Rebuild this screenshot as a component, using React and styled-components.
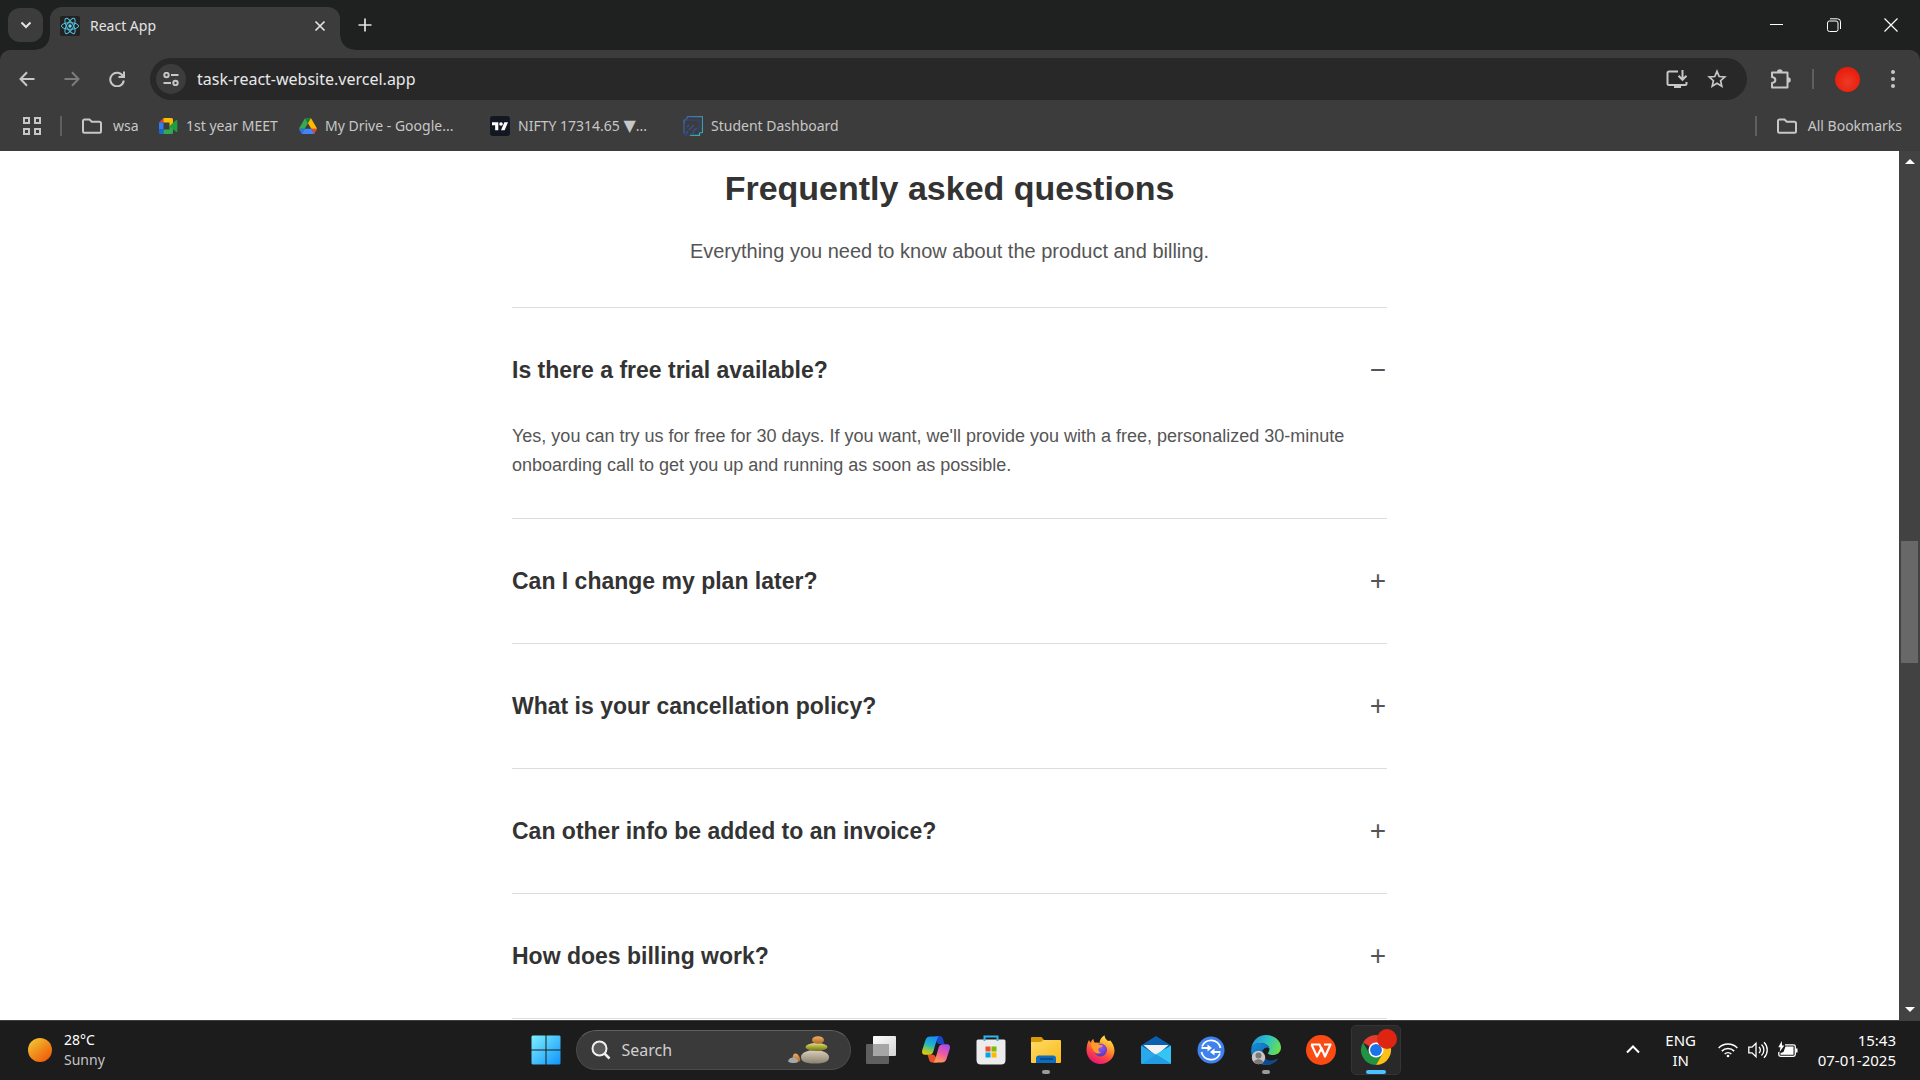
import React, { useState } from "react";
import styled, { createGlobalStyle } from "styled-components";

const GlobalStyle = createGlobalStyle`
  * { box-sizing: border-box; }
  body { margin: 0; background: #fff; }
  button, input { font: inherit; color: inherit; border: 0; padding: 0; margin: 0; background: none; outline: none; }
  a { color: inherit; text-decoration: none; }
  svg { display: block; flex: none; }
`;

const uiFont = `"Segoe UI", "Noto Sans", "Open Sans", sans-serif`;
const pageFont = `Arial, "Liberation Sans", sans-serif`;

const Screen = styled.div`
  height: 100vh;
  display: flex;
  flex-direction: column;
  overflow: hidden;
  font-family: ${uiFont};
`;

/* ---------- browser frame ---------- */

const TitleBar = styled.header`
  height: 50px;
  flex: none;
  display: flex;
  align-items: flex-start;
  padding-left: 8px;
  background: #1f2120;
  color: #e3e3e3;
`;

const TabSearch = styled.button`
  width: 35px;
  height: 34px;
  margin: 8px 7px 0 0;
  display: grid;
  place-items: center;
  border-radius: 12px;
  background: #3c3c3c;
`;

const Tab = styled.div`
  position: relative;
  width: 290px;
  height: 43px;
  margin-top: 7px;
  padding: 0 12px 6px 10px;
  display: flex;
  align-items: center;
  gap: 10px;
  border-radius: 12px 12px 0 0;
  background: #3c3c3c;
  font-size: 14px;
  line-height: 20px;

  &::before,
  &::after {
    content: "";
    position: absolute;
    bottom: 0;
    width: 14px;
    height: 14px;
  }
  &::before {
    left: -14px;
    background: radial-gradient(circle at 0 0, transparent 13px, #3c3c3c 14px);
  }
  &::after {
    right: -14px;
    background: radial-gradient(circle at 100% 0, transparent 13px, #3c3c3c 14px);
  }
`;

const TabTitle = styled.span`
  flex: 1;
`;

const IconButton = styled.button`
  width: ${(p) => p.$w || 30}px;
  height: ${(p) => p.$h || 30}px;
  flex: none;
  display: grid;
  place-items: center;
  border-radius: 50%;
  background: ${(p) => p.$bg || "transparent"};
`;

const TabClose = styled(IconButton).attrs({ $w: 16, $h: 20 })``;

const NewTab = styled(IconButton)`
  margin: 10px 0 0 10px;
`;

const WindowControls = styled.div`
  margin-left: auto;
  padding-right: 1px;
  display: flex;
`;

const WindowButton = styled(IconButton).attrs({ $w: 57, $h: 49 })`
  border-radius: 0;
`;

const Chrome = styled.div`
  background: #1f2120;
  flex: none;
`;

const ChromeInner = styled.div`
  background: #3c3c3c;
  border-radius: 10px 10px 0 0;
  color: #c7c7c7;
`;

const Toolbar = styled.nav`
  height: 50px;
  padding: 8px 19px 0 12px;
  display: flex;
  align-items: center;
`;

const NavGroup = styled.div`
  display: flex;
  gap: 15px;
  margin-right: 18px;
`;

const Omnibox = styled.form`
  flex: 1;
  height: 42px;
  padding: 0 15px 0 6px;
  display: flex;
  align-items: center;
  border-radius: 21px;
  background: #282828;
`;

const UrlInput = styled.input`
  flex: 1;
  margin-left: 11px;
  color: #e8e8e8;
  font-size: 16px;
  line-height: 26px;
`;

const OmniActions = styled.div`
  display: flex;
  gap: 10px;
`;

const ToolbarEnd = styled.div`
  display: flex;
  align-items: center;
  margin-left: 19px;
`;

const Rule = styled.span`
  width: 2px;
  height: 20px;
  background: #5f5f5f;
  margin: ${(p) => p.$m || "0"};
`;

const Avatar = styled.button`
  width: 25px;
  height: 25px;
  border-radius: 50%;
  background: radial-gradient(circle at 50% 60%, #ee3a28 0, #e9210f 60%, #dd1a08 100%);
  margin: 0 25px 0 20px;
`;

const BookmarkBar = styled.nav`
  height: 51px;
  padding: 0 18px 0 22px;
  display: flex;
  align-items: center;
  font-size: 14px;
  line-height: 20px;
  white-space: nowrap;
`;

const Bookmark = styled.a`
  display: flex;
  align-items: center;
  gap: ${(p) => p.$gap || 8}px;
  width: ${(p) => (p.$w ? p.$w + "px" : "auto")};
`;

const Triangle = styled.span`
  font-family: "DejaVu Sans", sans-serif;
  font-size: 16px;
  line-height: 16px;
`;

const Spacer = styled.span`
  flex: 1;
`;

/* ---------- web page ---------- */

const Viewport = styled.div`
  flex: 1;
  min-height: 0;
  display: flex;
  background: #fff;
`;

const Page = styled.main`
  flex: 1;
  overflow: hidden;
  padding-top: 16px;
  font-family: ${pageFont};
`;

const Faq = styled.section`
  max-width: 875px;
  margin: 0 auto;
`;

const Heading = styled.h1`
  margin: 0 0 30px;
  text-align: center;
  color: #333;
  font-size: 34px;
  line-height: 42px;
  font-weight: 700;
`;

const Lead = styled.p`
  margin: 0 0 44px;
  text-align: center;
  color: #555;
  font-size: 20px;
  line-height: 24px;
`;

const Item = styled.div`
  padding: 24px 0;
  border-top: 1px solid #ddd;
  &:last-child {
    border-bottom: 1px solid #ddd;
  }
`;

const ItemTitle = styled.h2`
  margin: 0;
  font-size: 23px;
  line-height: 28px;
`;

const Question = styled.button`
  width: 100%;
  padding: 24px 1px 24px 0;
  display: flex;
  justify-content: space-between;
  align-items: center;
  color: #333;
  font-weight: 700;
  text-align: left;
  cursor: pointer;
`;

const Sign = styled.span`
  color: #555;
  font-size: 28px;
  line-height: 28px;
  font-weight: 400;
`;

const Answer = styled.p`
  margin: 0;
  padding: 14px 0;
  color: #555;
  font-size: 18px;
  line-height: 29px;
`;

const ScrollBar = styled.div`
  width: 21px;
  flex: none;
  display: flex;
  flex-direction: column;
  background: #424242;
`;

const ScrollArrow = styled.button`
  height: 21px;
  display: grid;
  place-items: center;
`;

const Track = styled.div`
  flex: 1;
  display: grid;
  grid-template-rows: 369fr 122fr 336fr;
  padding: 0 2px;
`;

const Thumb = styled.div`
  grid-row: 2;
  background: #686868;
`;

/* ---------- taskbar ---------- */

const Taskbar = styled.footer`
  height: 60px;
  flex: none;
  display: grid;
  grid-template-columns: 1fr auto 1fr;
  align-items: center;
  padding: 0 0 2px 1px;
  border-top: 1px solid #404040;
  background: #1c1c1c;
  color: #fff;
  font-size: 14px;
  line-height: 20px;
`;

const Weather = styled.button`
  justify-self: start;
  padding-left: 27px;
  display: flex;
  align-items: center;
  gap: 12px;
  text-align: left;
`;

const Sun = styled.span`
  width: 24px;
  height: 24px;
  border-radius: 50%;
  background: linear-gradient(140deg, #f2c431 10%, #f08c1c 50%, #f0600c 85%);
`;

const Lines = styled.span`
  display: flex;
  flex-direction: column;
  text-align: ${(p) => p.$align || "left"};
`;

const Muted = styled.span`
  color: #c4c4c4;
`;

const Apps = styled.div`
  display: flex;
  align-items: center;
  gap: 5px;
`;

const AppButton = styled.button`
  position: relative;
  width: 50px;
  height: 50px;
  display: grid;
  place-items: center;
  border-radius: 5px;
  border: 1px solid ${(p) => (p.$active ? "#343434" : "transparent")};
  background: ${(p) => (p.$active ? "#292929" : "transparent")};
`;

const Indicator = styled.span`
  position: absolute;
  bottom: 0;
  left: 50%;
  transform: translateX(-50%);
  width: ${(p) => (p.$active ? 20 : 8)}px;
  height: 4px;
  border-radius: 2px;
  background: ${(p) => (p.$active ? "#4cc2ff" : "#9a9a9a")};
`;

const SearchBox = styled.label`
  width: 275px;
  height: 40px;
  padding: 0 20px 0 14px;
  display: flex;
  align-items: center;
  gap: 11px;
  border-radius: 20px;
  border: 1px solid #4a4a4a;
  border-top-color: #606060;
  background: #3a3a3a;
`;

const SearchInput = styled.input`
  flex: 1;
  min-width: 0;
  font-size: 16px;
  line-height: 22px;
  &::placeholder {
    color: #d0d0d0;
    opacity: 1;
  }
`;

const Tray = styled.div`
  justify-self: end;
  padding-right: 24px;
  display: flex;
  align-items: center;
  font-size: 15px;
`;

const Status = styled.button`
  display: flex;
  align-items: center;
  gap: 10px;
  margin: 0 20px 0 17px;
`;

const Language = styled.button`
  width: 40px;
  margin-left: 18px;
`;

const Clock = styled.button`
  min-width: 78px;
`;

/* ---------- drawings ---------- */

const Line = ({ w, h = w, box = `0 0 ${w} ${h}`, sw = 2, children, ...rest }) => (
  <svg width={w} height={h} viewBox={box} fill="none" stroke="currentColor" strokeWidth={sw} {...rest}>
    {children}
  </svg>
);

const ReactLogo = () => (
  <svg width="20" height="20" viewBox="0 0 20 20">
    <rect width="20" height="20" rx="2" fill="#222" />
    <g fill="none" stroke="#53c1de" strokeWidth="1">
      <ellipse cx="10" cy="10" rx="8.6" ry="3.3" />
      <ellipse cx="10" cy="10" rx="8.6" ry="3.3" transform="rotate(60 10 10)" />
      <ellipse cx="10" cy="10" rx="8.6" ry="3.3" transform="rotate(120 10 10)" />
    </g>
    <circle cx="10" cy="10" r="1.7" fill="#61dafb" />
  </svg>
);

const Folder = () => (
  <Line w={20} h={16}>
    <path d="M1 3a1.5 1.5 0 0 1 1.500-1.500h5l2.300 2.300h7.700A1.500 1.500 0 0 1 19 5.300v8a1.500 1.500 0 0 1-1.500 1.500h-15A1.500 1.500 0 0 1 1 13.300z" />
  </Line>
);

const MeetLogo = () => (
  <svg width="19" height="16" viewBox="0 0 19 16">
    <path d="M0 4.500L4.500 0v4.500z" fill="#ea4335" />
    <path d="M0 4.500h4.500v7H0z" fill="#2f7df6" />
    <path d="M0 11.500h4.500V16H1.500A1.500 1.500 0 0 1 0 14.500z" fill="#1967d2" />
    <path d="M4.500 0h8A1.500 1.500 0 0 1 14 1.500V8h-3.500V4.500h-6z" fill="#fbbc04" />
    <path d="M4.500 11.500h6V8H14v6.500a1.500 1.500 0 0 1-1.500 1.500h-8z" fill="#34a853" />
    <path d="M10.500 8L17 2.200c.6-.5 1.300-.2 1.300.500v10.600c0 .7-.7 1-1.300.5z" fill="#1e9e3e" />
  </svg>
);

const DriveLogo = () => (
  <svg width="18" height="16" viewBox="0 0 87.3 78">
    <path d="m6.6 66.85 3.850 6.650c.8 1.400 1.950 2.500 3.300 3.300l13.750-23.800h-27.500c0 1.550.4 3.100 1.200 4.500z" fill="#2a74e8" />
    <path d="m43.650 25-13.750-23.800c-1.350.8-2.500 1.900-3.300 3.300l-25.400 44a9.060 9.060 0 0 0-1.200 4.500h27.500z" fill="#34a853" />
    <path d="m73.550 76.800c1.350-.8 2.500-1.900 3.300-3.300l9.250-16c.8-1.400 1.200-2.950 1.200-4.500h-27.500l5.850 11.500z" fill="#ea4335" />
    <path d="m43.650 25 13.750-23.800c-1.350-.8-2.900-1.200-4.500-1.200h-18.500c-1.600 0-3.150.450-4.500 1.200z" fill="#188038" />
    <path d="m59.800 53h-32.300l-13.750 23.800c1.350.8 2.900 1.200 4.500 1.200h50.800c1.600 0 3.150-.450 4.500-1.200z" fill="#4285f4" />
    <path d="m73.400 26.500-12.700-22c-.8-1.400-1.950-2.500-3.300-3.300l-13.750 23.800 16.150 28h27.450c0-1.550-.4-3.100-1.200-4.500z" fill="#ffba00" />
  </svg>
);

const TradingLogo = () => (
  <svg width="20" height="20" viewBox="0 0 20 20">
    <rect width="20" height="20" rx="3" fill="#131722" />
    <g transform="translate(2 4.400) scale(.45)" fill="#fff">
      <path d="M14 22H7V11H0V4h14v18zM28 22h-8l7.500-18h8L28 22z" />
      <circle cx="20" cy="8" r="4" />
    </g>
  </svg>
);

const StudentLogo = () => (
  <svg width="20" height="20" viewBox="0 0 20 20" fill="none">
    <defs>
      <linearGradient id="student" x1="0" y1="0" x2="1" y2="1">
        <stop offset="0" stopColor="#3f63b4" />
        <stop offset="1" stopColor="#39b5b2" />
      </linearGradient>
    </defs>
    <path d="M1 17V4h2l1.500-3.300h15V16.500l-3 .5v2.300H7" stroke="url(#student)" strokeWidth="1.200" />
    <path d="M1 8v11h6M3 4h13v13" stroke="#2a4687" strokeWidth="1" />
    <path d="M4 11l2-2M6 14l5-5M3 18l2-3M10 15l4-3M9 18l2-2" stroke="#34519a" strokeWidth="1.400" />
  </svg>
);

const WindowsLogo = () => (
  <svg width="30" height="30" viewBox="0 0 30 30">
    <defs>
      <linearGradient id="win" x1="0" y1="0" x2="1" y2="1" gradientUnits="objectBoundingBox">
        <stop offset="0" stopColor="#7df0ff" />
        <stop offset="1" stopColor="#0f94fb" />
      </linearGradient>
    </defs>
    <path d="M1.500.5H14.500V14.500H.5V1.500zM15.500.5h13l1 1v13h-14zM.5 15.500h14v14h-13l-1-1zM15.500 15.500h14v13l-1 1h-13z" fill="url(#win)" />
  </svg>
);

const Stones = () => (
  <svg width="42" height="28" viewBox="0 0 42 28">
    <defs>
      <linearGradient id="stoneA" x1="0" y1="0" x2="0" y2="1">
        <stop offset="0" stopColor="#d9d0bd" />
        <stop offset="1" stopColor="#8b8170" />
      </linearGradient>
      <linearGradient id="stoneB" x1="0" y1="0" x2="0" y2="1">
        <stop offset="0" stopColor="#f0ad62" />
        <stop offset="1" stopColor="#ad6924" />
      </linearGradient>
      <linearGradient id="stoneC" x1="0" y1="0" x2="0" y2="1">
        <stop offset="0" stopColor="#e0e0a0" />
        <stop offset=".5" stopColor="#a8a82c" />
        <stop offset="1" stopColor="#6d7026" />
      </linearGradient>
    </defs>
    <path d="M5 25c-1-4 0-7 2-7.500 3-.5 6 5 5 8z" fill="url(#stoneB)" />
    <path d="M0 25c1-3 4-4 6-3.500 3 .5 5 3 4 4.500-2 1.500-9 1.500-10-1z" fill="#a6a6a8" />
    <path d="M13 21c0-4 6-7 14-7 7 0 14 3 14 7s-3 6.500-14 6.500S13 25 13 21z" fill="url(#stoneA)" />
    <ellipse cx="28.500" cy="11" rx="11" ry="4" fill="url(#stoneC)" />
    <ellipse cx="30" cy="4" rx="6" ry="3.800" fill="url(#stoneB)" />
  </svg>
);

const TaskView = () => (
  <svg width="30" height="28" viewBox="0 0 30 28">
    <defs>
      <linearGradient id="tv" x1="0" y1="0" x2="1" y2="1">
        <stop offset="0" stopColor="#fff" />
        <stop offset="1" stopColor="#d2d2d2" />
      </linearGradient>
    </defs>
    <rect y="8" width="23" height="20" rx="1" fill="#5f5f5f" />
    <rect x="7" width="23" height="20" rx="1" fill="url(#tv)" />
    <path d="M7 8h16v12H8l-1-1z" fill="#a6a6a6" />
  </svg>
);

const CopilotLogo = () => (
  <svg width="28" height="27" viewBox="0 0 28 27">
    <defs>
      <linearGradient id="cpA" x1=".6" y1="0" x2=".3" y2="1">
        <stop offset="0" stopColor="#1c8df0" />
        <stop offset=".45" stopColor="#1fb5c9" />
        <stop offset=".75" stopColor="#8bcb4a" />
        <stop offset="1" stopColor="#f5c400" />
      </linearGradient>
      <linearGradient id="cpB" x1=".7" y1="0" x2=".3" y2="1">
        <stop offset="0" stopColor="#a44cf0" />
        <stop offset=".5" stopColor="#ee5aa0" />
        <stop offset="1" stopColor="#ffa04d" />
      </linearGradient>
    </defs>
    <path d="M13 0h4.500c2 0 3 1 3.500 3l1.500 5H18c-2 0-3-1-4-3z" fill="#1747c8" />
    <path d="M15 26.500h-4.500c-2 0-3-1-3.500-3l-1.500-5H10c2 0 3 1 4 3z" fill="#e8502a" />
    <path d="M8.500.5H17c-1.500 1-2 2.500-2.600 4.500L11.500 15c-.8 2.700-2 3.800-4.500 3.800H3c-2.500 0-3.500-2-2.700-4.800L3.500 4C4.300 1.500 5.800.5 8.500.5z" fill="url(#cpA)" />
    <path d="M19.500 26.500H11c1.500-1 2-2.500 2.600-4.500L16.500 12c.8-2.700 2-3.800 4.500-3.800h4c2.500 0 3.500 2 2.700 4.800L24.500 23c-.8 2.500-2.300 3.500-5 3.500z" fill="url(#cpB)" />
  </svg>
);

const StoreLogo = () => (
  <svg width="30" height="30" viewBox="0 0 30 30">
    <path d="M.5 6q0-1.500 1.500-1.500h26q1.500 0 1.500 1.500v19q0 4.500-4.500 4.500H5q-4.500 0-4.500-4.500z" fill="#ececec" />
    <path d="M8.500 6V1.500h13V6" fill="none" stroke="#2fb5ec" strokeWidth="2" />
    <path d="M9.500 11.500h5v5h-5z" fill="#f25022" />
    <path d="M15.500 11.500h5v5h-5z" fill="#7fba00" />
    <path d="M9.500 17.500h5v5h-5z" fill="#00a4ef" />
    <path d="M15.500 17.500h5v5h-5z" fill="#ffb900" />
  </svg>
);

const ExplorerLogo = () => (
  <svg width="30" height="26" viewBox="0 0 30 26">
    <defs>
      <linearGradient id="fold" x1="0" y1="0" x2="1" y2="1">
        <stop offset="0" stopColor="#ffdc6a" />
        <stop offset="1" stopColor="#fbb917" />
      </linearGradient>
    </defs>
    <path d="M0 1q0-1 1-1h9.500l3 3.500V8H0z" fill="#d99a08" />
    <path d="M0 5h10l2.500-2H29q1 0 1 1v21q0 1-1 1H1q-1 0-1-1z" fill="url(#fold)" />
    <path d="M5 26v-4.500q0-3 3-3h14q3 0 3 3V26z" fill="#0f6cbd" />
    <path d="M9 22h13" stroke="#083f73" strokeWidth="1.300" />
  </svg>
);

const FirefoxLogo = () => (
  <svg width="29" height="29" viewBox="0 0 29 29">
    <defs>
      <linearGradient id="ffA" x1=".8" y1="0" x2=".3" y2="1">
        <stop offset="0" stopColor="#fff44f" />
        <stop offset=".35" stopColor="#ffa22c" />
        <stop offset=".65" stopColor="#ff4b3e" />
        <stop offset="1" stopColor="#e5127c" />
      </linearGradient>
      <radialGradient id="ffB" cx=".5" cy=".3" r=".7">
        <stop offset="0" stopColor="#9059ff" />
        <stop offset="1" stopColor="#5b38b5" />
      </radialGradient>
    </defs>
    <path d="M3 5c.5 1 1 2 1.800 2.500C5.500 5.500 6.300 4.500 7.500 4c0 1.700.5 3 1.500 3.700 1.500-.5 3-.4 4.500.300C13.800 4.500 15.500 2 18.500.3c.2 2.700 1.500 4 3.500 5.700 1-.3 1.500 0 2.300-.5 2.500 3 4.200 6 4.200 10.500C28 23.500 22 29 14.500 29S.5 23 .5 15C.5 11 1.300 8 3 5z" fill="url(#ffA)" />
    <circle cx="14.500" cy="15" r="6.500" fill="url(#ffB)" />
    <path d="M5 8.500c3-1.500 6-.5 8.500 1.500 1.500 0 3 .2 3.500.8-1 1.700-3 1.700-4.500 2.700-.5 2 .500 3.500 2.500 4-3 2.500-7.500.5-8-3.500-1.800-1.200-2.300-3.500-2-5.500z" fill="#ff9a2c" />
  </svg>
);

const MailLogo = () => (
  <svg width="30" height="28" viewBox="0 0 30 28">
    <path d="M0 9.500L15 0l15 9.500v5H0z" fill="#0b5fb0" />
    <path d="M2.500 9h25L15 20z" fill="#f2f2f2" />
    <path d="M0 9.500L17 20 30 28H1q-1 0-1-1z" fill="#29a8ea" />
    <path d="M30 9.500L14.500 18.500 30 28z" fill="#35c5f4" />
    <path d="M1 28L15 18.200 30 28z" fill="#229be2" />
  </svg>
);

const SyncLogo = () => (
  <svg width="28" height="28" viewBox="0 0 28 28" fill="none">
    <circle cx="14" cy="14" r="13.500" fill="#3f82ee" />
    <g stroke="#fff" strokeWidth="1.800">
      <path d="M5 10.500a9.700 9.700 0 0 1 18.500 1.500" />
      <path d="M23 17.500a9.700 9.700 0 0 1-18.500-1.500" />
      <path d="M4.500 12H11M23.500 16H17" />
    </g>
    <path d="M10.500 8.500l4.500 3.500-4.500 3.500zM17.500 12.500L13 16l4.500 3.500z" fill="#fff" />
  </svg>
);

const EdgeLogo = () => (
  <svg width="30" height="30" viewBox="0 0 30 30">
    <defs>
      <linearGradient id="edA" x1="0" y1=".2" x2="1" y2=".5">
        <stop offset="0" stopColor="#1f8fdd" />
        <stop offset=".5" stopColor="#2cc0c8" />
        <stop offset="1" stopColor="#66e052" />
      </linearGradient>
      <linearGradient id="edB" x1="0" y1="0" x2="1" y2="1">
        <stop offset="0" stopColor="#168fdc" />
        <stop offset="1" stopColor="#0c4f9b" />
      </linearGradient>
    </defs>
    <path d="M.2 14C1 6 7 0 15 0c9 0 15 6 15 12.500 0 5-4 7.500-8.500 7.500-3.500 0-5-1-4.500-2 1-1.500 1.500-2.500 1.500-4 0-3-4-6-9-6C5 8 1.500 10.500.2 14z" fill="url(#edA)" />
    <path d="M.1 15C1 10.500 5 8 9.500 8c5 0 9 3 9 6-1-1.500-3-2-4.500-1-2 1-3 4-2 7 1.500 4.500 6 6.500 10.500 5.500 2-.4 3.500-1.200 4.500-1.700C25 27 20.500 30 15.500 30 7 30-.5 24 .1 15z" fill="url(#edB)" />
    <path d="M12 14c-2.500 8 4 14 11 11 1.700-.6 3-1.300 4-1.200C24.500 27.500 20 30 15.500 30 9 28 7 19 12 14z" fill="#114a8b" />
    <circle cx="7.500" cy="22.500" r="6.700" fill="#c9c7c5" />
    <circle cx="7.500" cy="20.500" r="3" fill="#7b7876" />
    <path d="M3 27.300c0-4 9-4 9 0-2.500 2.500-6.500 2.500-9 0z" fill="#7b7876" />
  </svg>
);

const WpsLogo = () => (
  <svg width="30" height="30" viewBox="0 0 30 30" fill="none">
    <circle cx="15" cy="15" r="15" fill="#fb4a12" />
    <path d="M5 9.500h8.500l3 7M5.500 9.500l5.500 12 4.500-8.500 3.500 8.500 5.500-12h-6.500" stroke="#fff" strokeWidth="2.200" strokeLinejoin="round" />
  </svg>
);

const ChromeLogo = () => (
  <svg width="42" height="42" viewBox="0 0 42 42">
    <g transform="translate(6 6) scale(.625)">
      <path d="M24 24L3.200 12a24 24 0 0 1 41.600 0z" fill="#e33b2e" />
      <path d="M24 24L13.600 30 3.200 12A24 24 0 0 0 24 48l10.400-18z" fill="#229342" />
      <path d="M24 12h20.800A24 24 0 0 1 24 48l10.400-18z" fill="#fbc116" />
      <circle cx="24" cy="24" r="12" fill="#fff" />
      <circle cx="24" cy="24" r="9.500" fill="#1a73e8" />
    </g>
    <circle cx="32" cy="10" r="10" fill="#df2412" />
  </svg>
);

/* ---------- content ---------- */

const bookmarks = [
  { label: "wsa", icon: <Folder />, width: 77, gap: 11 },
  { label: "1st year MEET", icon: <MeetLogo />, width: 140 },
  { label: "My Drive - Google...", icon: <DriveLogo />, width: 191 },
  { label: <>NIFTY 17314.65 <Triangle>▼</Triangle>...</>, icon: <TradingLogo />, width: 193 },
  { label: "Student Dashboard", icon: <StudentLogo /> },
];

const questions = [
  {
    q: "Is there a free trial available?",
    a: "Yes, you can try us for free for 30 days. If you want, we'll provide you with a free, personalized 30-minute onboarding call to get you up and running as soon as possible.",
  },
  { q: "Can I change my plan later?", a: "Yes, you can switch plans at any time." },
  { q: "What is your cancellation policy?", a: "You can cancel at any time." },
  { q: "Can other info be added to an invoice?", a: "Yes, extra details can be added to each invoice." },
  { q: "How does billing work?", a: "Plans are billed per workspace." },
];

const apps = [
  { name: "Task View", icon: <TaskView /> },
  { name: "Copilot", icon: <CopilotLogo /> },
  { name: "Microsoft Store", icon: <StoreLogo /> },
  { name: "File Explorer", icon: <ExplorerLogo />, running: true },
  { name: "Firefox", icon: <FirefoxLogo /> },
  { name: "Mail", icon: <MailLogo /> },
  { name: "Sync", icon: <SyncLogo /> },
  { name: "Edge", icon: <EdgeLogo />, running: true },
  { name: "WPS Office", icon: <WpsLogo /> },
  { name: "Chrome", icon: <ChromeLogo />, running: true, active: true },
];

function BrowserFrame() {
  return (
    <>
      <TitleBar>
        <TabSearch aria-label="Search tabs">
          <Line w={12} h={8}><path d="M1.500 1.500L6 6l4.500-4.500" /></Line>
        </TabSearch>
        <Tab>
          <ReactLogo />
          <TabTitle>React App</TabTitle>
          <TabClose aria-label="Close tab">
            <Line w={12} sw={1.7}><path d="M1.500 1.500l9 9M10.500 1.500l-9 9" /></Line>
          </TabClose>
        </Tab>
        <NewTab aria-label="New tab">
          <Line w={14} sw={1.7}><path d="M7 .5v13M.5 7h13" /></Line>
        </NewTab>
        <WindowControls>
          <WindowButton aria-label="Minimize">
            <Line w={13} h={13} sw={1} stroke="#fff"><path d="M0 6.500h13" /></Line>
          </WindowButton>
          <WindowButton aria-label="Restore">
            <Line w={14} sw={1} stroke="#fff">
              <rect x=".5" y="3" width="10.500" height="10.500" rx="2" />
              <path d="M3 .8h7.500a3 3 0 0 1 3 3V11" />
            </Line>
          </WindowButton>
          <WindowButton aria-label="Close">
            <Line w={14} sw={1.2} stroke="#fff"><path d="M.5.5l13 13M13.500.5l-13 13" /></Line>
          </WindowButton>
        </WindowControls>
      </TitleBar>
      <Chrome>
        <ChromeInner>
          <Toolbar aria-label="Navigation">
            <NavGroup>
              <IconButton aria-label="Back">
                <Line w={16}><path d="M15.500 8H1.500M8 1.300L1.500 8 8 14.700" /></Line>
              </IconButton>
              <IconButton aria-label="Forward">
                <Line w={16} stroke="#7c7c7c"><path d="M.5 8h14M8 1.300L14.500 8 8 14.700" /></Line>
              </IconButton>
              <IconButton aria-label="Reload">
                <Line w={16}>
                  <path d="M14 5.200A6.800 6.800 0 1 0 14.800 9.500" />
                  <path d="M15 .5V6H9.500" />
                </Line>
              </IconButton>
            </NavGroup>
            <Omnibox onSubmit={(e) => e.preventDefault()}>
              <IconButton type="button" $bg="#3c3c3c" aria-label="Site information">
                <Line w={16} h={14}>
                  <circle cx="3.500" cy="3" r="2.200" />
                  <path d="M8 3h7.500M.5 11H8" />
                  <circle cx="12.500" cy="11" r="2.200" />
                </Line>
              </IconButton>
              <UrlInput aria-label="Address" defaultValue="task-react-website.vercel.app" />
              <OmniActions>
                <IconButton type="button" aria-label="Install app">
                  <Line w={22} h={19}>
                    <path d="M12 1.500H3A1.500 1.500 0 0 0 1.500 3v10.500A1.500 1.500 0 0 0 3 15h16a1.500 1.500 0 0 0 1.500-1.500V12" />
                    <path d="M8 17h7M16.500 0v9.500M12.500 5.800l4 4 4-4" />
                  </Line>
                </IconButton>
                <IconButton type="button" aria-label="Bookmark this page">
                  <Line w={20} sw={1.7}>
                    <path d="M10 2.300l2.200 5.200 5.600.5-4.200 3.700 1.200 5.500L10 14.300l-4.800 2.900 1.200-5.500L2.200 8l5.600-.5z" />
                  </Line>
                </IconButton>
              </OmniActions>
            </Omnibox>
            <ToolbarEnd>
              <IconButton aria-label="Extensions">
                <svg width="22" height="22" viewBox="0 0 22 22">
                  <path d="M2 4.500h15.500v15H2v-4.500c4.500-.5 4.500-5.500 0-6z" fill="none" stroke="currentColor" strokeWidth="2" strokeLinejoin="round" />
                  <path d="M7 4a2.800 2.800 0 0 1 5.600 0zM18 9.200a2.800 2.800 0 0 1 0 5.600z" fill="currentColor" />
                </svg>
              </IconButton>
              <Rule $m="0 1px 0 16px" />
              <Avatar aria-label="Profile" />
              <IconButton $w={16} aria-label="Menu">
                <svg width="4" height="18" viewBox="0 0 4 18" fill="currentColor">
                  <circle cx="2" cy="2" r="2" /><circle cx="2" cy="9" r="2" /><circle cx="2" cy="16" r="2" />
                </svg>
              </IconButton>
            </ToolbarEnd>
          </Toolbar>
          <BookmarkBar aria-label="Bookmarks">
            <IconButton $w={20} aria-label="Apps">
              <Line w={18}>
                <rect x="1" y="1" width="5" height="5" /><rect x="12" y="1" width="5" height="5" />
                <rect x="1" y="12" width="5" height="5" /><rect x="12" y="12" width="5" height="5" />
              </Line>
            </IconButton>
            <Rule $m="0 20px 0 18px" />
            {bookmarks.map((b, i) => (
              <Bookmark key={i} href="#" $w={b.width} $gap={b.gap}>
                {b.icon}
                <span>{b.label}</span>
              </Bookmark>
            ))}
            <Spacer />
            <Rule $m="0 20px 0 0" />
            <Bookmark href="#" $gap={11}>
              <Folder />
              <span>All Bookmarks</span>
            </Bookmark>
          </BookmarkBar>
        </ChromeInner>
      </Chrome>
    </>
  );
}

function FaqPage() {
  const [open, setOpen] = useState(0);
  return (
    <Page>
      <Faq>
        <Heading>Frequently asked questions</Heading>
        <Lead>Everything you need to know about the product and billing.</Lead>
        <div>
          {questions.map(({ q, a }, i) => (
            <Item key={q}>
              <ItemTitle>
                <Question aria-expanded={open === i} onClick={() => setOpen(open === i ? -1 : i)}>
                  <span>{q}</span>
                  <Sign>{open === i ? "−" : "+"}</Sign>
                </Question>
              </ItemTitle>
              {open === i && <Answer>{a}</Answer>}
            </Item>
          ))}
        </div>
      </Faq>
    </Page>
  );
}

function WindowsTaskbar() {
  return (
    <Taskbar>
      <Weather>
        <Sun />
        <Lines>
          <span>28°C</span>
          <Muted>Sunny</Muted>
        </Lines>
      </Weather>
      <Apps>
        <AppButton aria-label="Start"><WindowsLogo /></AppButton>
        <SearchBox>
          <Line w={20} h={20} stroke="#f0f0f0">
            <circle cx="8.500" cy="8.500" r="7" fill="#5a5a5a" />
            <path d="M13.500 13.500l5 5" strokeWidth="2.500" />
          </Line>
          <SearchInput aria-label="Search" placeholder="Search" />
          <Stones />
        </SearchBox>
        {apps.map((app) => (
          <AppButton key={app.name} aria-label={app.name} $active={app.active}>
            {app.icon}
            {app.running && <Indicator $active={app.active} />}
          </AppButton>
        ))}
      </Apps>
      <Tray>
        <IconButton $w={20} aria-label="Hidden icons">
          <Line w={14} h={9}><path d="M1 7.500l6-6 6 6" /></Line>
        </IconButton>
        <Language>
          <Lines $align="center">
            <span>ENG</span>
            <span>IN</span>
          </Lines>
        </Language>
        <Status aria-label="Network, volume and battery">
          <Line w={20} h={16} sw={1.5} stroke="#fff">
            <path d="M.7 6a13 13 0 0 1 18.600 0M3.800 9.100a8.700 8.700 0 0 1 12.400 0M6.700 12a4.700 4.700 0 0 1 6.600 0" />
            <circle cx="10" cy="14" r="1.300" fill="#fff" stroke="none" />
          </Line>
          <Line w={20} h={18} sw={1.3} stroke="#fff">
            <path d="M.8 6.200H4L8 2.200v13.600l-4-4H.8z" />
            <path d="M11 6a4 4 0 0 1 0 6M13.500 3.500a7.500 7.500 0 0 1 0 11M16 1.200a11 11 0 0 1 0 15.600" />
          </Line>
          <svg width="20" height="17" viewBox="0 0 20 17">
            <path d="M7 3.800h8.500a1.800 1.800 0 0 1 1.800 1.800v8a1.800 1.800 0 0 1-1.800 1.800h-13A1.800 1.800 0 0 1 .8 13.600V11" fill="none" stroke="#fff" strokeWidth="1.300" />
            <path d="M7.500 5.500h8v8.200h-13V12l3-1zM18 7.500h1.500v4H18z" fill="#fff" />
            <path d="M3.800 0L.3 6.200h2.200L1.600 11l4.700-6.500H4z" fill="#fff" />
          </svg>
        </Status>
        <Clock>
          <Lines $align="right">
            <span>15:43</span>
            <span>07-01-2025</span>
          </Lines>
        </Clock>
      </Tray>
    </Taskbar>
  );
}

export default function App() {
  return (
    <Screen>
      <GlobalStyle />
      <BrowserFrame />
      <Viewport>
        <FaqPage />
        <ScrollBar>
          <ScrollArrow aria-label="Scroll up">
            <svg width="10" height="5" viewBox="0 0 10 5"><path d="M0 5l5-5 5 5z" fill="#fff" /></svg>
          </ScrollArrow>
          <Track><Thumb /></Track>
          <ScrollArrow aria-label="Scroll down">
            <svg width="10" height="5" viewBox="0 0 10 5"><path d="M0 0l5 5 5-5z" fill="#fff" /></svg>
          </ScrollArrow>
        </ScrollBar>
      </Viewport>
      <WindowsTaskbar />
    </Screen>
  );
}
